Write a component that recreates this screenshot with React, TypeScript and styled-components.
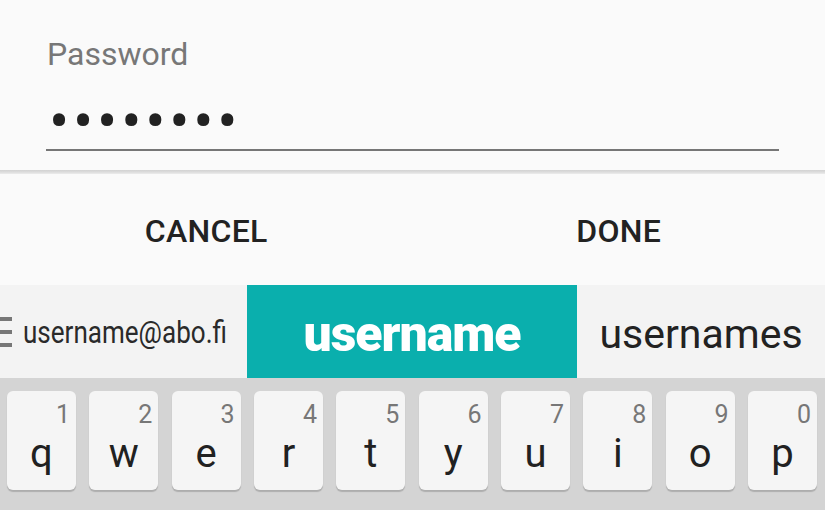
import React from "react";
import styled, { createGlobalStyle } from "styled-components";

const GlobalStyle = createGlobalStyle`
  html, body { margin: 0; padding: 0; background: #fafafa; }
  body { font-family: Roboto, "Noto Sans", "Liberation Sans", sans-serif; }
  * { box-sizing: border-box; }
`;

const Screen = styled.div`
  width: 825px;
  height: 510px;
  display: flex;
  flex-direction: column;
  overflow: hidden;
  background: #fafafa;
`;

const FieldPanel = styled.div`
  height: 170px;
  padding: 38px 46px 0;
  display: flex;
  flex-direction: column;
  background: #fafafa;
`;

const FieldLabel = styled.div`
  font-size: 32px;
  line-height: 32px;
  color: #777777;
  padding-left: 1px;
`;

const Masked = styled.div`
  margin-top: 25px;
  height: 56px;
  font-size: 60px;
  line-height: 54px;
  letter-spacing: 3.8px;
  color: #222222;
  padding-left: 3px;
  border-bottom: 2px solid #767676;
  white-space: nowrap;
`;

const Divider = styled.div`
  height: 4px;
  background: linear-gradient(#d2d2d2, #dcdcdc 50%, #ececec);
`;

const ButtonBar = styled.div`
  height: 111px;
  display: grid;
  grid-template-columns: 1fr 1fr;
  background: #fafafa;
`;

const DialogButton = styled.div`
  display: flex;
  align-items: center;
  justify-content: center;
  font-size: 32px;
  font-weight: 500;
  letter-spacing: 0.3px;
  color: #222222;
  padding-top: 3px;
`;

const SuggestionStrip = styled.div`
  height: 93px;
  display: grid;
  grid-template-columns: 247px 330px 1fr;
  background: #f3f3f3;
`;

const Suggestion = styled.div<{ $active?: boolean }>`
  display: flex;
  align-items: center;
  justify-content: center;
  overflow: hidden;
  background: ${(p) => (p.$active ? "#0aafad" : "transparent")};
  color: ${(p) => (p.$active ? "#ffffff" : "#222222")};
`;

const SideSuggestion = styled(Suggestion)`
  justify-content: flex-start;
  gap: 11px;
`;

const SmallWord = styled.span`
  font-size: 31px;
  display: inline-block;
  transform: scaleX(0.84);
  transform-origin: left center;
  white-space: nowrap;
  color: #2a2a2a;
  margin-top: 2px;
`;

const BigWord = styled.span`
  font-size: 50px;
  font-weight: 900;
  letter-spacing: -1px;
  margin-top: 4px;
`;

const PlainWord = styled.span`
  font-size: 41px;
  margin-top: 4px;
  color: #222222;
`;

const Keyboard = styled.div`
  flex: 1;
  background: #d4d4d4;
  padding: 13px 8px 0 7px;
`;

const KeyRow = styled.div`
  display: grid;
  grid-template-columns: repeat(10, 1fr);
  column-gap: 13.4px;
`;

const Key = styled.div`
  height: 99px;
  border-radius: 6px;
  background: #f5f5f5;
  box-shadow: 0 2px 1px rgba(0, 0, 0, 0.18);
  display: flex;
  flex-direction: column;
  align-items: center;
  padding-top: 11px;
`;

const KeyHint = styled.span`
  align-self: flex-end;
  padding-right: 6px;
  font-size: 25px;
  line-height: 25px;
  color: #777777;
`;

const KeyLetter = styled.span`
  margin-top: 7px;
  font-size: 40px;
  line-height: 40px;
  color: #212121;
`;

const MenuBars = () => (
  <svg width="12" height="32" viewBox="0 0 12 32" style={{ flexShrink: 0 }}>
    <rect x="0" y="1" width="12" height="4" fill="#777" />
    <rect x="0" y="14" width="12" height="4" fill="#777" />
    <rect x="0" y="27" width="12" height="4" fill="#777" />
  </svg>
);

const keys: [string, string][] = [
  ["q", "1"],
  ["w", "2"],
  ["e", "3"],
  ["r", "4"],
  ["t", "5"],
  ["y", "6"],
  ["u", "7"],
  ["i", "8"],
  ["o", "9"],
  ["p", "0"],
];

export default function App() {
  return (
    <>
      <GlobalStyle />
      <Screen>
        <FieldPanel>
          <FieldLabel>Password</FieldLabel>
          <Masked>••••••••</Masked>
        </FieldPanel>
        <Divider />
        <ButtonBar>
          <DialogButton>CANCEL</DialogButton>
          <DialogButton>DONE</DialogButton>
        </ButtonBar>
        <SuggestionStrip>
          <SideSuggestion>
            <MenuBars />
            <SmallWord>username@abo.fi</SmallWord>
          </SideSuggestion>
          <Suggestion $active>
            <BigWord>username</BigWord>
          </Suggestion>
          <Suggestion>
            <PlainWord>usernames</PlainWord>
          </Suggestion>
        </SuggestionStrip>
        <Keyboard>
          <KeyRow>
            {keys.map(([l, n]) => (
              <Key key={l}>
                <KeyHint>{n}</KeyHint>
                <KeyLetter>{l}</KeyLetter>
              </Key>
            ))}
          </KeyRow>
        </Keyboard>
      </Screen>
    </>
  );
}
